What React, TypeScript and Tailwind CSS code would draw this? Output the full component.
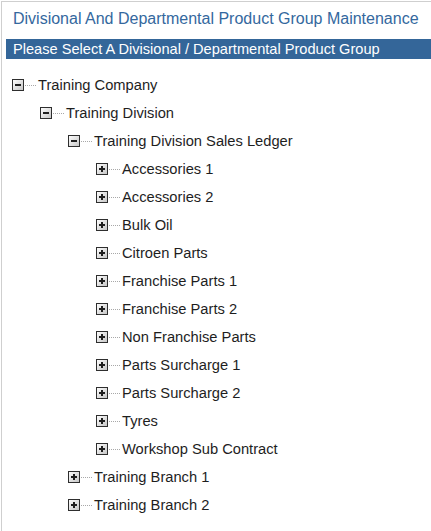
const tree = {
  label: "Training Company",
  open: true,
  children: [
    {
      label: "Training Division",
      open: true,
      children: [
        {
          label: "Training Division Sales Ledger",
          open: true,
          children: [
            "Accessories 1",
            "Accessories 2",
            "Bulk Oil",
            "Citroen Parts",
            "Franchise Parts 1",
            "Franchise Parts 2",
            "Non Franchise Parts",
            "Parts Surcharge 1",
            "Parts Surcharge 2",
            "Tyres",
            "Workshop Sub Contract",
          ].map((label) => ({ label, open: false, children: [] as Node[] })),
        },
        { label: "Training Branch 1", open: false, children: [] },
        { label: "Training Branch 2", open: false, children: [] },
      ],
    },
  ],
};

type Node = { label: string; open: boolean; children: Node[] };

function Toggle({ open }: { open: boolean }) {
  return (
    <svg width="12" height="12" viewBox="0 0 12 12" className="shrink-0">
      <defs>
        <linearGradient id="tg" x1="0" y1="0" x2="1" y2="1">
          <stop offset="0" stopColor="#ffffff" />
          <stop offset="1" stopColor="#c4c4c4" />
        </linearGradient>
      </defs>
      <rect x="0.5" y="0.5" width="11" height="11" fill="url(#tg)" stroke="#2e2e2e" />
      <rect x="3" y="5" width="6" height="2" fill="#1e1e1e" />
      {!open && <rect x="5" y="3" width="2" height="6" fill="#1e1e1e" />}
    </svg>
  );
}

function Row({ node, depth }: { node: Node; depth: number }) {
  return (
    <>
      <div className="flex items-center h-[28px]" style={{ paddingLeft: 11 + depth * 28 }}>
        <Toggle open={node.open} />
        <span className="w-[11px] ml-px border-t border-dotted border-[#a8a8a8]" />
        <span className="ml-[2px] text-[14.7px] text-[#1e1e1e] whitespace-nowrap">{node.label}</span>
      </div>
      {node.open && node.children.map((c) => <Row key={c.label} node={c} depth={depth + 1} />)}
    </>
  );
}

export default function App() {
  return (
    <div className="w-[431px] h-[531px] bg-white overflow-hidden font-['Liberation_Sans',Arial,sans-serif]">
      <div className="mt-px ml-px h-full border-t border-l border-[#cfcfcf] pl-[4px]">
        <h1 className="pl-[7px] pt-[7px] h-[37px] text-[16px] leading-[20px] text-[#34689e] whitespace-nowrap">
          Divisional And Departmental Product Group Maintenance
        </h1>
        <div className="h-[20px] bg-[#346699] pl-[7px] text-[14.6px] leading-[20px] text-white whitespace-nowrap">
          Please Select A Divisional / Departmental Product Group
        </div>
        <div className="pt-[12px] -ml-[5px]">
          <Row node={tree} depth={0} />
        </div>
      </div>
    </div>
  );
}
